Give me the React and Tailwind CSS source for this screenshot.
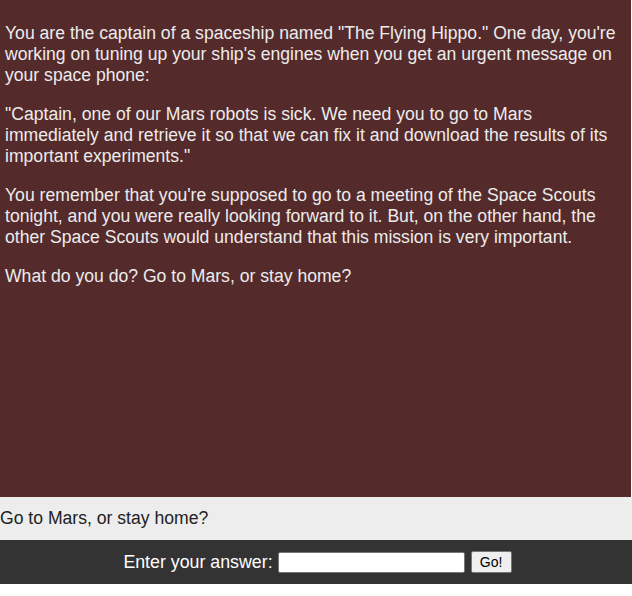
export default function App() {
  return (
    <div className="w-[632px] font-['Liberation_Sans',Arial,sans-serif] text-[17.6px] leading-[21px]">
      {/* story panel */}
      <div className="h-[497px] w-[631px] bg-[#552a2b] px-[5px] pt-[5px] text-[#ececec] overflow-hidden">
        <p className="my-[18px]">
          You are the captain of a spaceship named "The Flying Hippo." One day, you're working on tuning up your ship's engines when you get an urgent message on your space phone:
        </p>
        <p className="my-[18px]">
          "Captain, one of our Mars robots is sick. We need you to go to Mars immediately and retrieve it so that we can fix it and download the results of its important experiments."
        </p>
        <p className="my-[18px]">
          You remember that you're supposed to go to a meeting of the Space Scouts tonight, and you were really looking forward to it. But, on the other hand, the other Space Scouts would understand that this mission is very important.
        </p>
        <p className="my-[18px]">What do you do? Go to Mars, or stay home?</p>
      </div>

      {/* prompt */}
      <div className="h-[43px] bg-[#ededed] text-[#222] flex items-center">
        Go to Mars, or stay home?
      </div>

      {/* answer bar */}
      <div className="h-[44px] bg-[#333333] flex items-center justify-center gap-[5px] pl-[3px]">
        <span className="text-white text-[17.8px]">Enter your answer:</span>
        <input
          type="text"
          className="w-[187px] h-[21px] bg-white border border-[#767676] rounded-[2px]"
        />
        <button className="h-[22px] w-[41px] bg-[#efefef] border border-[#767676] rounded-[2px] text-[14px] leading-none text-black ml-[1px]">
          Go!
        </button>
      </div>
    </div>
  );
}
